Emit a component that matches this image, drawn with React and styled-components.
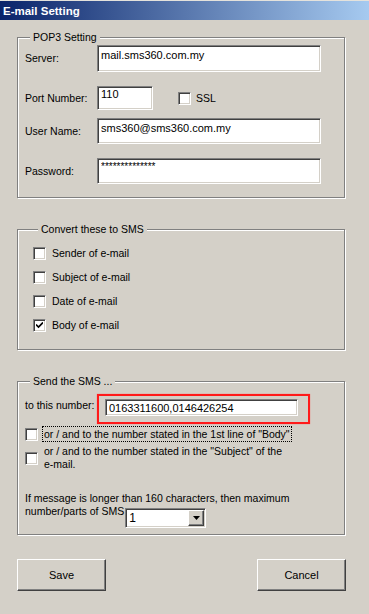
import React from "react"
import styled, { createGlobalStyle, css } from "styled-components"

const face = "#d4d0c8"

const GlobalStyle = createGlobalStyle`
  html, body {
    margin: 0;
    padding: 0;
    background: ${face};
  }
  body {
    font-family: "Liberation Sans", Arial, sans-serif;
  }
`

const sunken = css`
  border: 1px solid;
  border-color: #808080 #ffffff #ffffff #808080;
  box-shadow: inset 1px 1px 0 #404040, inset -1px -1px 0 ${face};
`

const raised = css`
  border: 1px solid;
  border-color: #ffffff #404040 #404040 #ffffff;
  box-shadow: inset -1px -1px 0 #808080, inset 1px 1px 0 ${face};
`

const Window = styled.div`
  width: 369px;
  height: 614px;
  background: ${face};
  display: flex;
  flex-direction: column;
  overflow: hidden;
  font-size: 10.5px;
  color: #000;
`

const TitleBar = styled.div`
  height: 20px;
  box-sizing: border-box;
  border-top: 1px solid #e4e2dc;
  background: linear-gradient(to right, #0a246a, #a6caf0);
  color: #fff;
  font-weight: bold;
  font-size: 11.5px;
  display: flex;
  align-items: center;
  padding-left: 3px;
`

const Content = styled.div`
  display: flex;
  flex-direction: column;
  padding: 0 23px 0 17px;
`

const Group = styled.fieldset`
  margin: ${({ $mt }) => $mt}px 0 0;
  padding: ${({ $pad }) => $pad};
  width: 328px;
  min-width: 0;
  box-sizing: border-box;
  border: 1px solid #808080;
  box-shadow: 1px 1px 0 #fff, inset 1px 1px 0 #fff;
`

const Legend = styled.legend`
  margin-left: 5px;
  padding: 0 3px;
  line-height: 12px;
  font-size: 10.5px;
  background: ${face};
`

const Row = styled.div`
  display: flex;
  align-items: ${({ $align }) => $align || "center"};
  margin-top: ${({ $mt }) => $mt || 0}px;
  margin-left: ${({ $ml }) => $ml || 0}px;
`

const FieldLabel = styled.label`
  width: ${({ $w }) => $w}px;
  flex-shrink: 0;
  line-height: 13px;
  padding-top: ${({ $pt }) => $pt || 0}px;
`

const TextBox = styled.input`
  ${sunken};
  box-sizing: border-box;
  width: ${({ $w }) => $w}px;
  height: ${({ $h }) => $h}px;
  margin: 0;
  padding: ${({ $pt, $h }) => `${$pt}px 3px ${$h - 2 - $pt - 13}px`};
  font: ${({ $fs }) => $fs || 11}px/13px "Liberation Sans", Arial, sans-serif;
  background: #fff;
  color: #000;
  outline: none;
`

const Box = styled.span`
  ${sunken};
  box-sizing: border-box;
  width: 13px;
  height: 13px;
  background: #fff;
  display: inline-flex;
  align-items: center;
  justify-content: center;
  flex-shrink: 0;
`

const CheckText = styled.span`
  margin-left: ${({ $ml }) => $ml}px;
  line-height: 13px;
`

const FocusText = styled.span`
  margin-left: 4px;
  padding: 0 1px;
  line-height: 14px;
  border: 1px dotted #000;
`

const Highlight = styled.div`
  border: 2px solid #ff1a1a;
  box-shadow: 0 0 1px #ff6060;
  padding: 3px 10px 6px 6px;
`

const Line = styled.div`
  line-height: 13px;
  white-space: nowrap;
  margin-top: ${({ $mt }) => $mt || 0}px;
`

const Combo = styled.div`
  ${sunken};
  box-sizing: border-box;
  width: 81px;
  height: 20px;
  margin: 3px 0 0 ${({ $ml }) => $ml}px;
  padding: 1px;
  background: #fff;
  display: flex;
  align-items: stretch;
  justify-content: space-between;
  font-size: 12px;
`

const ComboValue = styled.span`
  padding-left: 2px;
  line-height: 16px;
`

const ArrowButton = styled.span`
  ${raised};
  box-sizing: border-box;
  width: 16px;
  background: ${face};
  display: flex;
  align-items: center;
  justify-content: center;
`

const ButtonRow = styled.div`
  display: flex;
  justify-content: space-between;
  margin-top: 24px;
`

const Button = styled.button`
  ${raised};
  width: 89px;
  height: 32px;
  margin: 0;
  padding: 0;
  background: ${face};
  font: 11px "Liberation Sans", Arial, sans-serif;
  color: #000;
`

const Tick = () => (
  <svg width="7" height="7" viewBox="0 0 7 7">
    <path d="M0 2.5 L2.5 5 L7 0.5" fill="none" stroke="#000" strokeWidth="1.7" />
  </svg>
)

const CheckBox = ({ checked }) => <Box>{checked && <Tick />}</Box>

const convertItems = [
  { label: "Sender of e-mail", checked: false },
  { label: "Subject of e-mail", checked: false },
  { label: "Date of e-mail", checked: false },
  { label: "Body of e-mail", checked: true },
]

const App = () => {
  return (
    <>
      <GlobalStyle />
      <Window>
        <TitleBar>E-mail Setting</TitleBar>
        <Content>
          <Group $mt={11} $pad="2px 0 13px 7px">
            <Legend>POP3 Setting</Legend>
            <Row>
              <FieldLabel $w={72}>Server:</FieldLabel>
              <TextBox $w={224} $h={27} $pt={2} defaultValue="mail.sms360.com.my" />
            </Row>
            <Row $mt={14}>
              <FieldLabel $w={72}>Port Number:</FieldLabel>
              <TextBox $w={56} $h={24} $pt={0} defaultValue="110" />
              <Row $ml={25}>
                <CheckBox />
                <CheckText $ml={5}>SSL</CheckText>
              </Row>
            </Row>
            <Row $mt={8}>
              <FieldLabel $w={72}>User Name:</FieldLabel>
              <TextBox $w={224} $h={26} $pt={2} defaultValue="sms360@sms360.com.my" />
            </Row>
            <Row $mt={14}>
              <FieldLabel $w={72}>Password:</FieldLabel>
              <TextBox $w={224} $h={26} $pt={1} $fs={10} defaultValue="**************" />
            </Row>
          </Group>

          <Group $mt={25} $pad="12px 0 17px 15px">
            <Legend>Convert these to SMS</Legend>
            {convertItems.map((item, i) => (
              <Row key={item.label} $mt={i === 0 ? 0 : 11}>
                <CheckBox checked={item.checked} />
                <CheckText $ml={6}>{item.label}</CheckText>
              </Row>
            ))}
          </Group>

          <Group $mt={25} $pad="7px 0 6px 7px">
            <Legend>Send the SMS ...</Legend>
            <Row $align="flex-start">
              <FieldLabel $w={72} $pt={5}>to this number:</FieldLabel>
              <Highlight>
                <TextBox $w={193} $h={17} $pt={1} defaultValue="0163311600,0146426254" />
              </Highlight>
            </Row>
            <Row $mt={2}>
              <CheckBox />
              <FocusText>or / and to the number stated in the 1st line of "Body"</FocusText>
            </Row>
            <Row $mt={3}>
              <CheckBox />
              <CheckText $ml={6}>
                or / and to the number stated in the "Subject" of the
                <br />
                e-mail.
              </CheckText>
            </Row>
            <Line $mt={21}>
              If message is longer than 160 characters, then maximum
            </Line>
            <Row $align="flex-start">
              <Line>number/parts of SMS</Line>
              <Combo $ml={1}>
                <ComboValue>1</ComboValue>
                <ArrowButton>
                  <svg width="7" height="4" viewBox="0 0 7 4">
                    <path d="M0 0 H7 L3.5 4 Z" fill="#000" />
                  </svg>
                </ArrowButton>
              </Combo>
            </Row>
          </Group>

          <ButtonRow>
            <Button>Save</Button>
            <Button>Cancel</Button>
          </ButtonRow>
        </Content>
      </Window>
    </>
  )
}

export default App
